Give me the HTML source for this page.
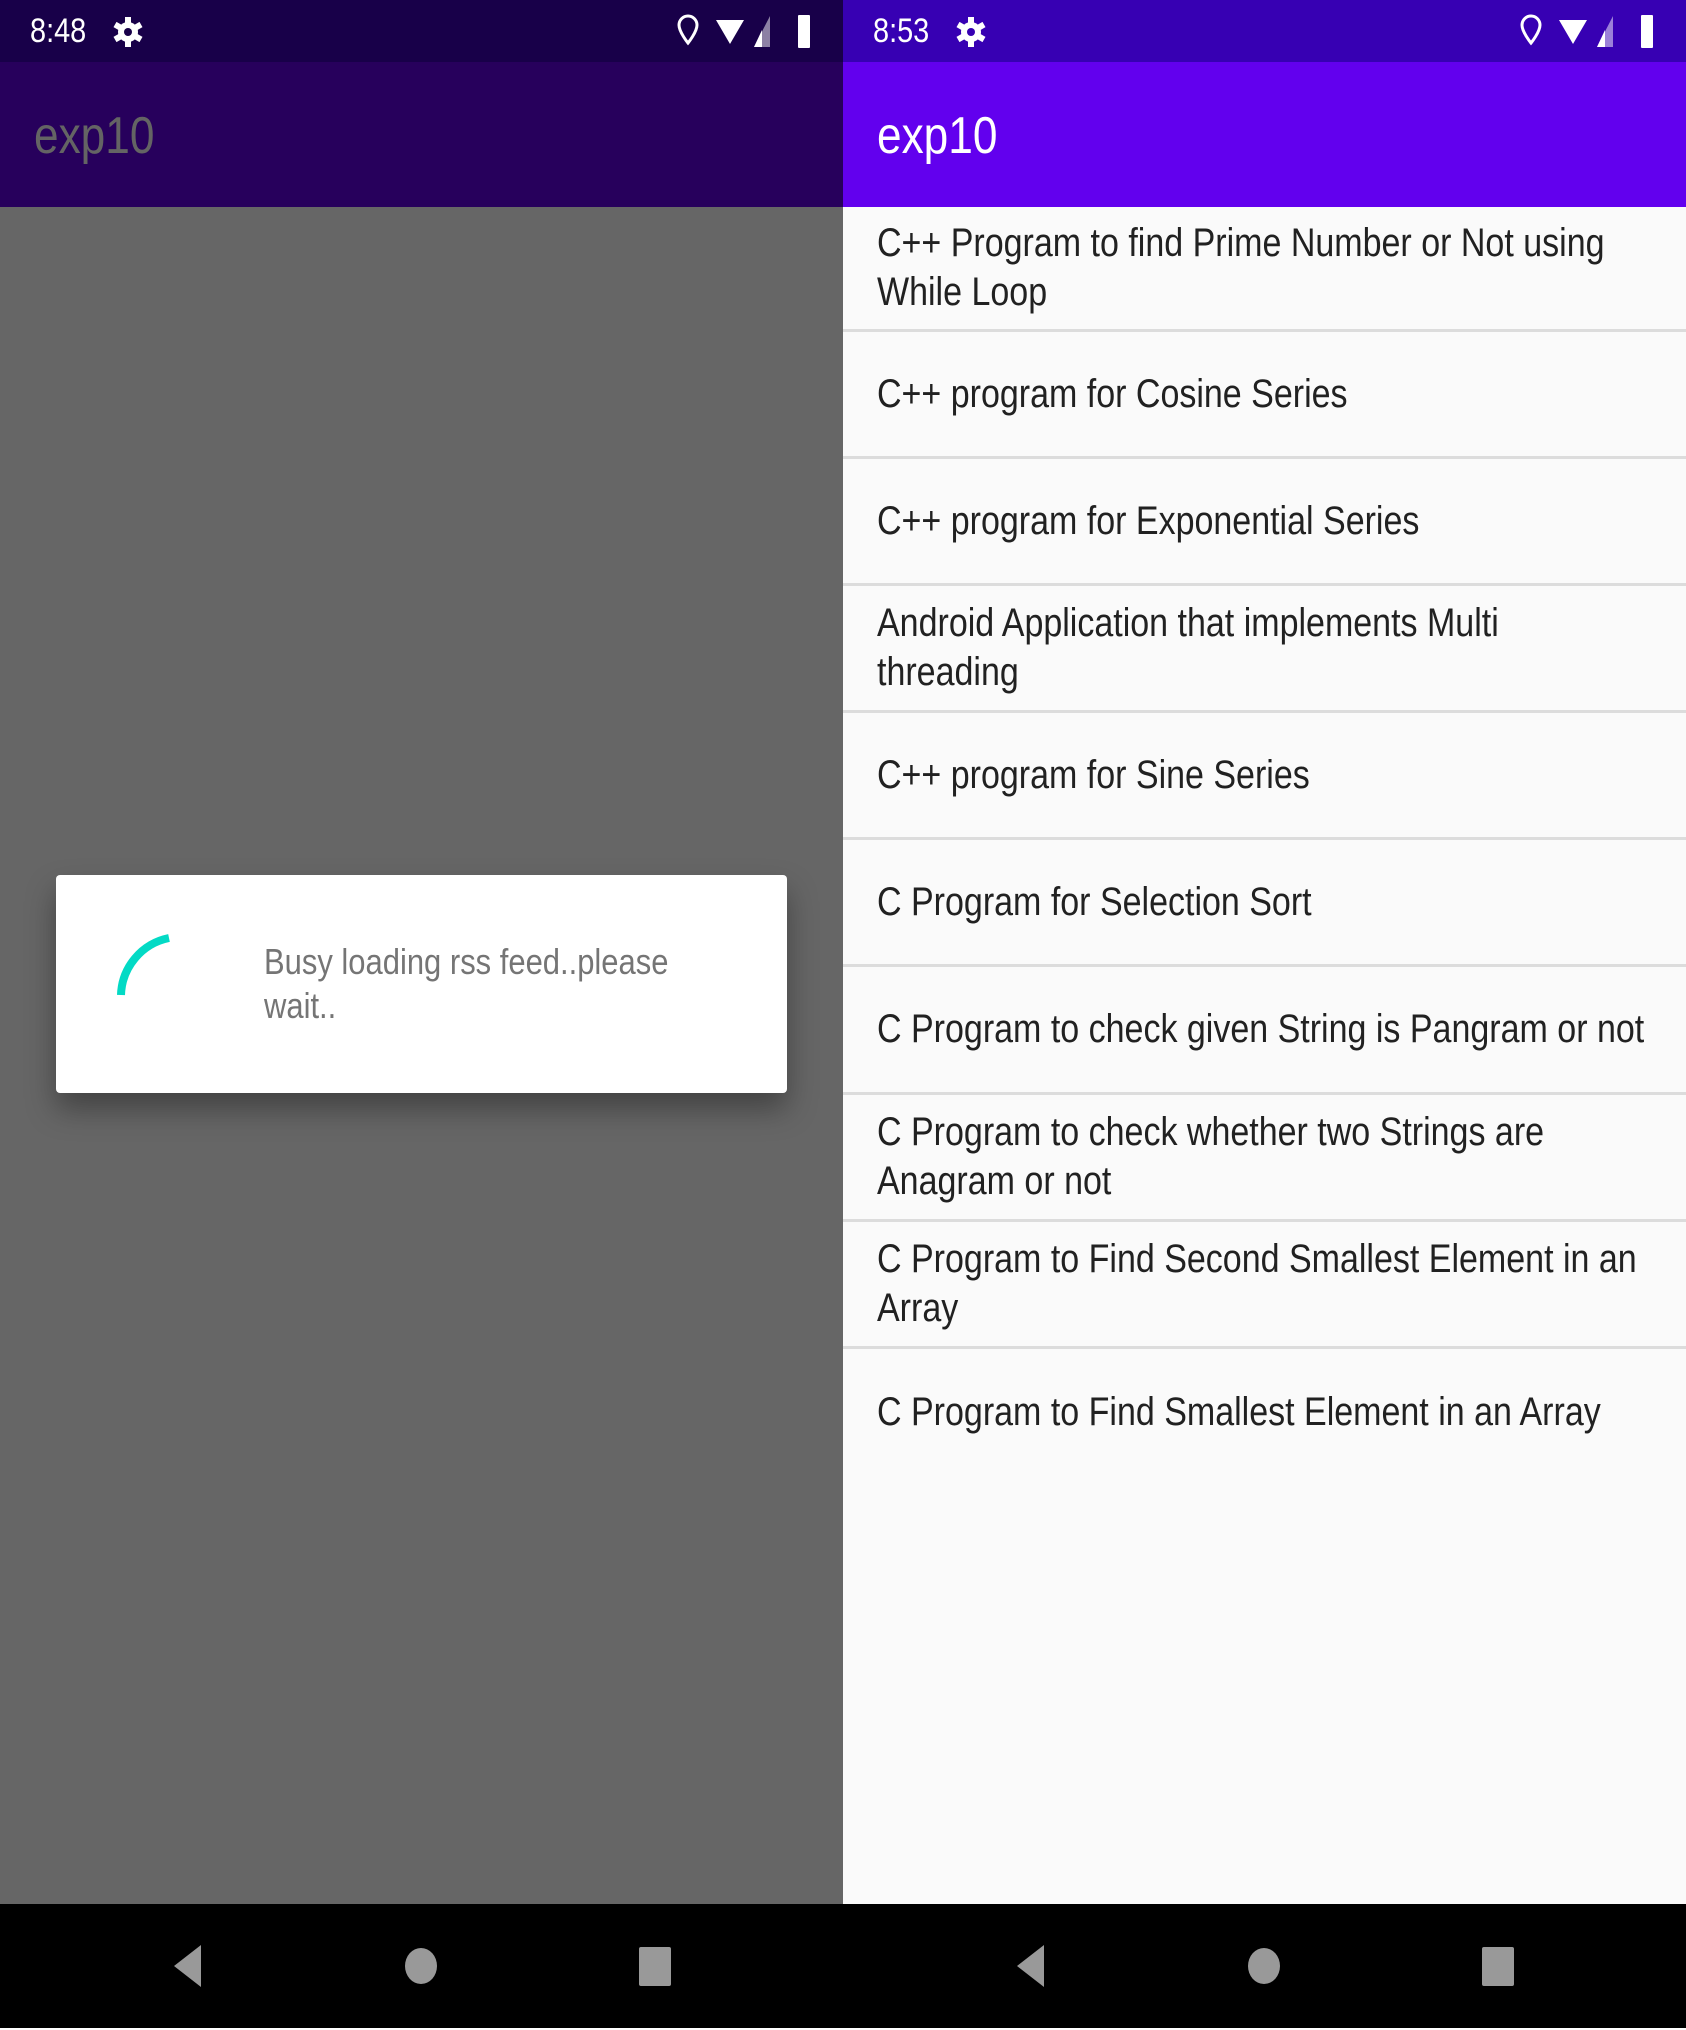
<!DOCTYPE html>
<html><head><meta charset="utf-8"><style>
*{margin:0;padding:0;box-sizing:border-box}
body{width:1686px;height:2030px;overflow:hidden;background:#fff;font-family:"Liberation Sans",sans-serif;position:relative}
.abs{position:absolute}
.sx{transform:scaleX(0.85);transform-origin:left center;white-space:nowrap}
.row{position:absolute;left:843px;width:843px;display:flex;align-items:center;border-bottom:3px solid #dcdcdc}
.row .t{margin-left:34px;font-size:40px;line-height:49px;color:#212121}
.time{font-size:34px;color:#fff;top:12px}
</style></head><body>
<div class="abs" style="left:0;top:0;width:843px;height:62px;background:#180049"></div>
<div class="abs" style="left:0;top:62px;width:843px;height:145px;background:#27005c"></div>
<div class="abs" style="left:0;top:207px;width:843px;height:1697px;background:#666"></div>
<div class="abs sx time" style="left:30px">8:48</div>
<div class="abs sx" style="left:34px;top:106px;font-size:52px;color:#646464">exp10</div>
<div class="abs" style="left:843px;top:0;width:843px;height:62px;background:#3700b3"></div>
<div class="abs" style="left:843px;top:62px;width:843px;height:145px;background:#6200ee"></div>
<div class="abs" style="left:843px;top:207px;width:843px;height:1697px;background:#fafafa"></div>
<div class="abs sx time" style="left:873px">8:53</div>
<div class="abs sx" style="left:877px;top:106px;font-size:52px;color:#fff">exp10</div>

<svg class="abs" style="left:0;top:0" width="1686" height="62">
<g fill="#fff">
<g stroke="#fff" stroke-width="6" stroke-linecap="butt"><path d="M128 17v30M115 24.5l26 15M115 39.5l26-15"/></g>
<circle cx="128" cy="32" r="10"/><circle cx="128" cy="32" r="4" fill="#180049"/>
<path d="M688 16a9 9 0 0 1 9 9c0 7-9 18-9 18s-9-11-9-18a9 9 0 0 1 9-9z" fill="none" stroke="#fff" stroke-width="3"/>
<path d="M716 20h28l-14 24z"/>
<path d="M770 16v31h-16z" opacity=".5"/><path d="M762 30v17h-8z"/>
<rect x="798" y="15" width="12" height="33" rx="1"/>
</g>
<g fill="#fff" transform="translate(843,0)">
<g stroke="#fff" stroke-width="6"><path d="M128 17v30M115 24.5l26 15M115 39.5l26-15"/></g>
<circle cx="128" cy="32" r="10"/><circle cx="128" cy="32" r="4" fill="#3700b3"/>
<path d="M688 16a9 9 0 0 1 9 9c0 7-9 18-9 18s-9-11-9-18a9 9 0 0 1 9-9z" fill="none" stroke="#fff" stroke-width="3"/>
<path d="M716 20h28l-14 24z"/>
<path d="M770 16v31h-16z" opacity=".5"/><path d="M762 30v17h-8z"/>
<rect x="798" y="15" width="12" height="33" rx="1"/>
</g>
</svg>

<div class="row" style="top:207px;height:125px"><div class="t sx">C++ Program to find Prime Number or Not using<br>While Loop</div></div>
<div class="row" style="top:332px;height:127px"><div class="t sx">C++ program for Cosine Series</div></div>
<div class="row" style="top:459px;height:127px"><div class="t sx">C++ program for Exponential Series</div></div>
<div class="row" style="top:586px;height:127px"><div class="t sx">Android Application that implements Multi<br>threading</div></div>
<div class="row" style="top:713px;height:127px"><div class="t sx">C++ program for Sine Series</div></div>
<div class="row" style="top:840px;height:127px"><div class="t sx">C Program for Selection Sort</div></div>
<div class="row" style="top:967px;height:128px"><div class="t sx">C Program to check given String is Pangram or not</div></div>
<div class="row" style="top:1095px;height:127px"><div class="t sx">C Program to check whether two Strings are<br>Anagram or not</div></div>
<div class="row" style="top:1222px;height:127px"><div class="t sx">C Program to Find Second Smallest Element in an<br>Array</div></div>
<div class="row" style="top:1349px;height:127px;border-bottom:none"><div class="t sx">C Program to Find Smallest Element in an Array</div></div>

<div class="abs" style="left:56px;top:875px;width:731px;height:218px;background:#fff;border-radius:4px;box-shadow:0 16px 30px rgba(0,0,0,.35)"></div>
<svg class="abs" style="left:0;top:850px" width="843" height="300">
<path d="M121 145 A60 60 0 0 1 169 88" fill="none" stroke="#03dac5" stroke-width="8"/>
</svg>
<div class="abs" style="left:264px;top:940px;font-size:36px;line-height:44px;color:#757575;transform:scaleX(0.86);transform-origin:left center;white-space:nowrap">Busy loading rss feed..please<br>wait..</div>

<div class="abs" style="left:0;top:1904px;width:1686px;height:124px;background:#000"></div>
<svg class="abs" style="left:0;top:1904px" width="1686" height="124">
<g fill="#999">
<path d="M201 41v42l-27-21z"/><ellipse cx="421" cy="62" rx="16" ry="18"/><rect x="639" y="43" width="32" height="39" rx="2"/>
<path d="M1044 41v42l-27-21z"/><ellipse cx="1264" cy="62" rx="16" ry="18"/><rect x="1482" y="43" width="32" height="39" rx="2"/>
</g>
</svg>
</body></html>
